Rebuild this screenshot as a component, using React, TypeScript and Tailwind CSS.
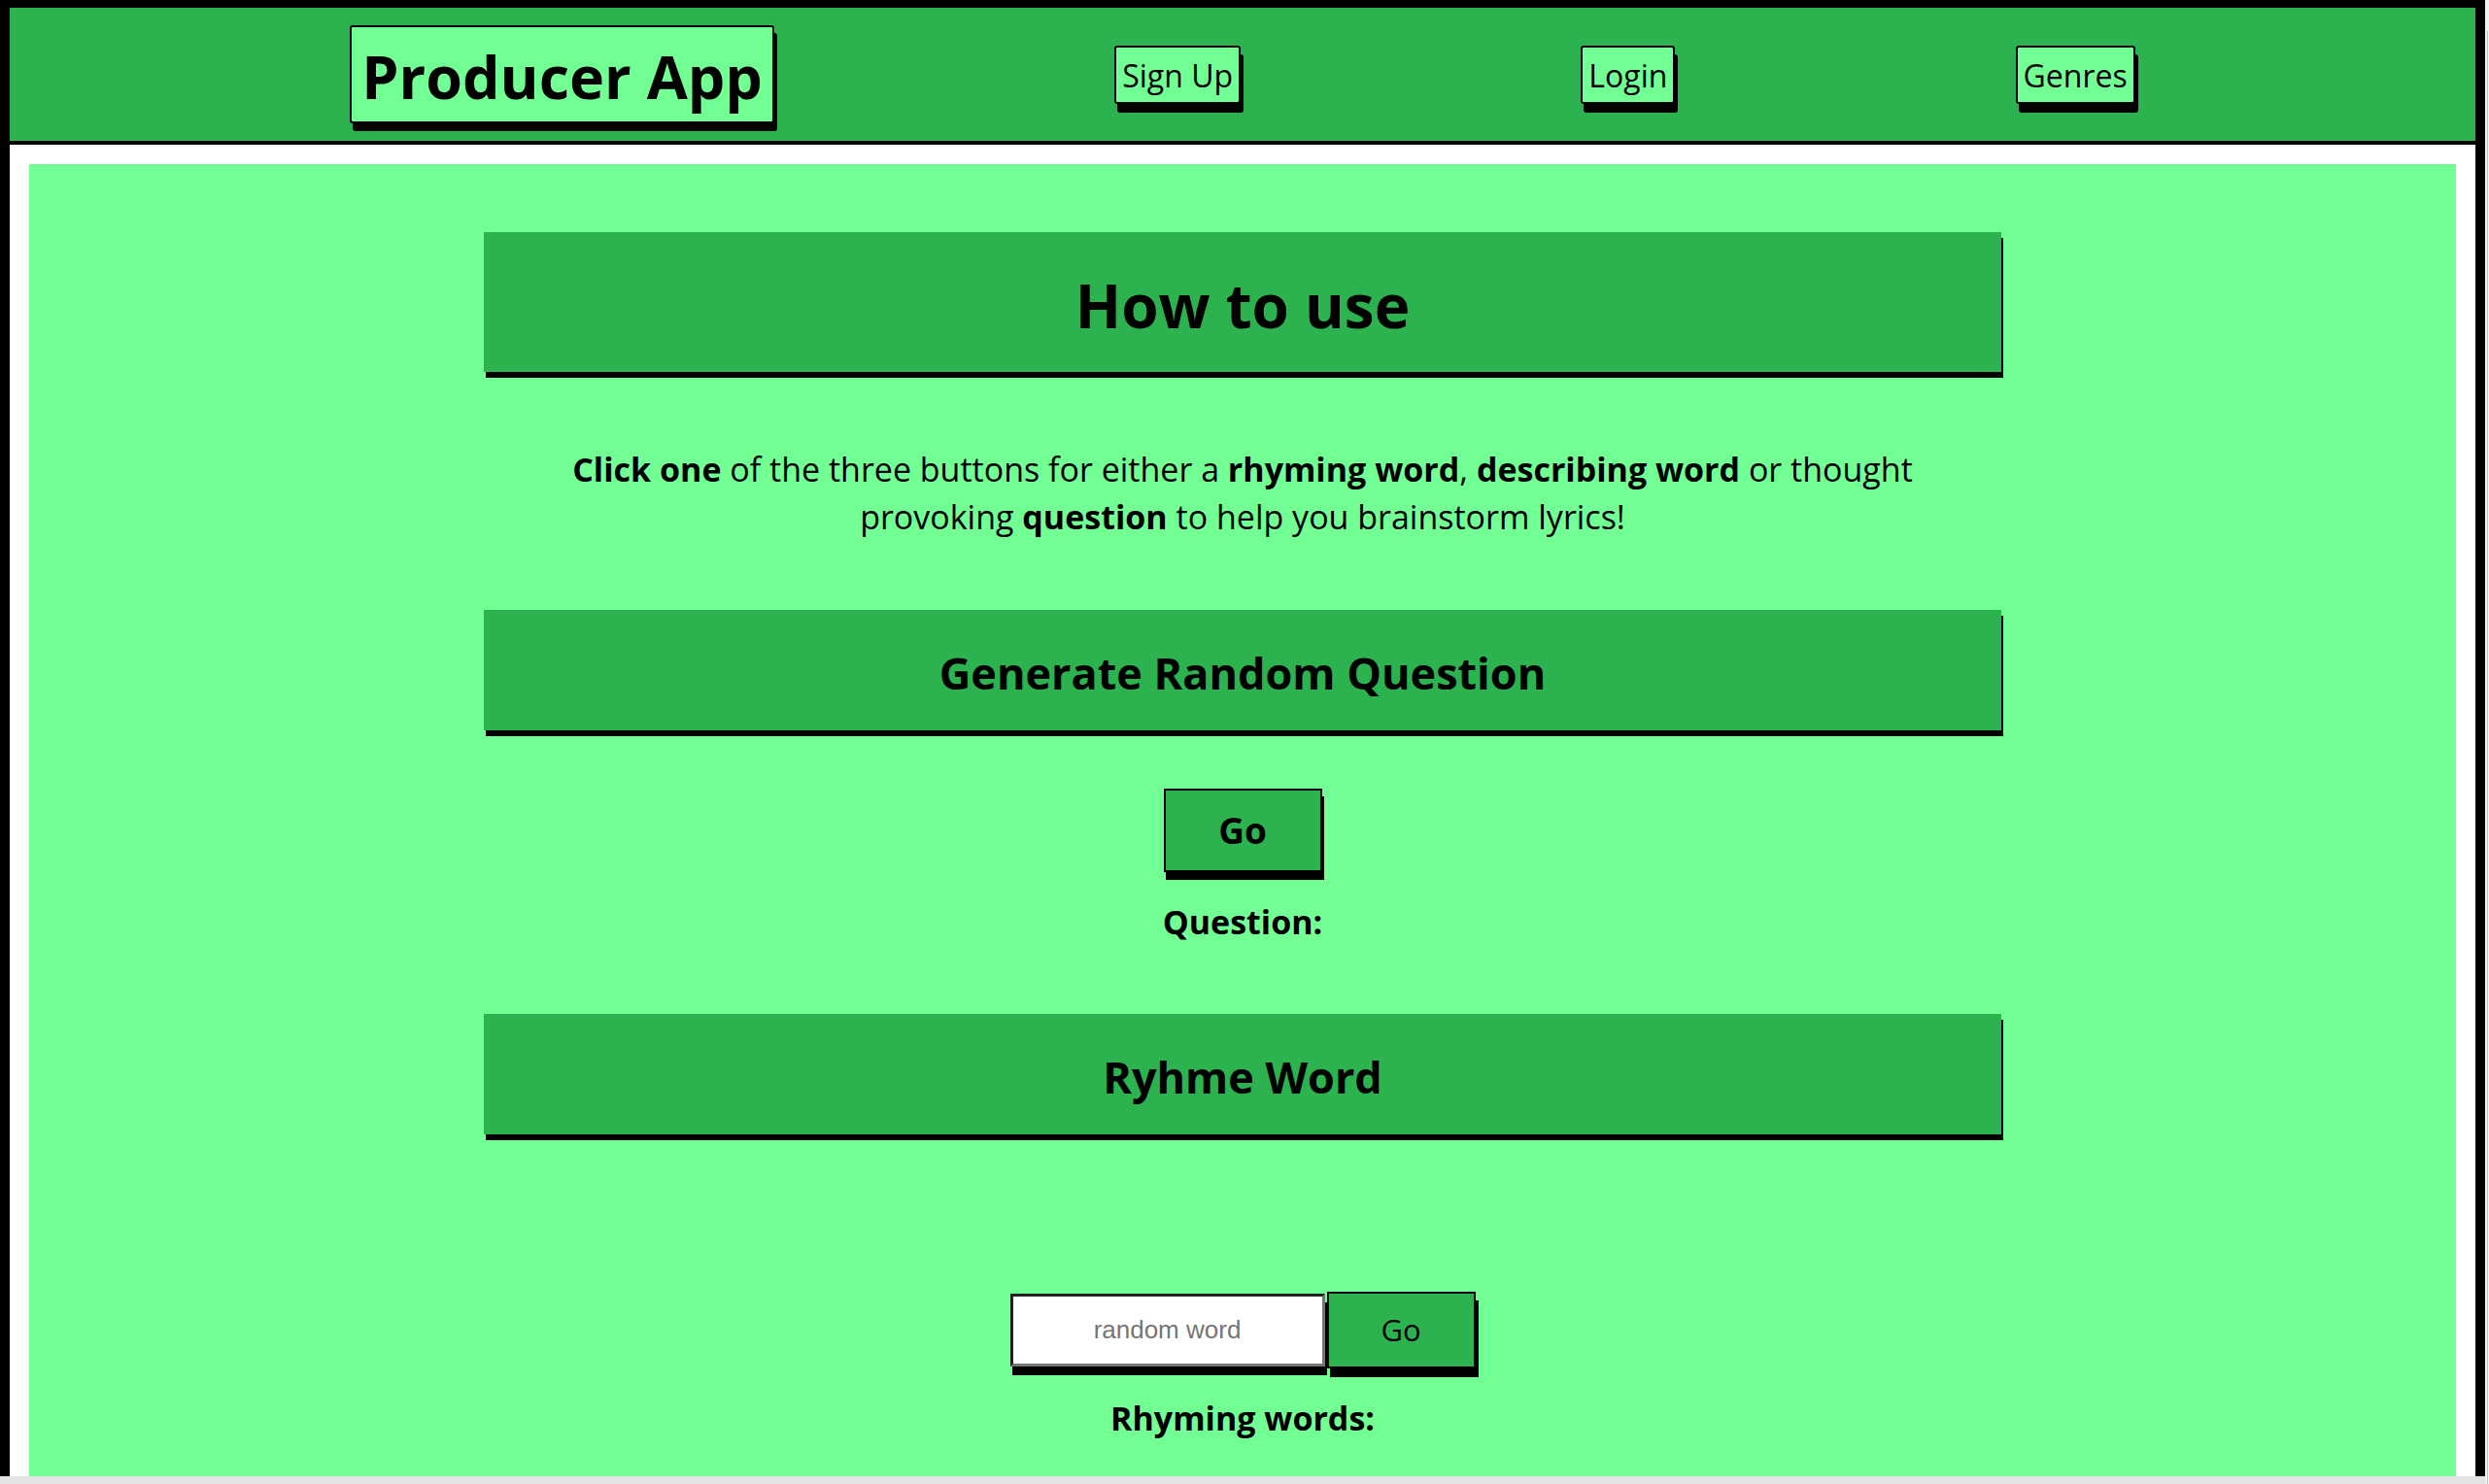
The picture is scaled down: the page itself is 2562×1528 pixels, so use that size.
import { useState } from "react";

const navLinks = ["Sign Up", "Login", "Genres"];

function SectionBar({ title, big }: { title: string; big?: boolean }) {
  return (
    <div
      className={`w-[1562px] flex items-center justify-center pt-[6px] bg-[#2cb34f] shadow-[2px_6px_0_#000] ${
        big ? "h-[144px]" : "h-[124px]"
      }`}
    >
      <h2 className={`font-bold text-black ${big ? "text-[62px]" : "text-[45px]"}`}>{title}</h2>
    </div>
  );
}

export default function App() {
  const [question, setQuestion] = useState("");
  const [word, setWord] = useState("");

  return (
    <div className="flex h-[1528px] w-full overflow-hidden bg-[#f1f1f1] font-['Open_Sans',sans-serif]">
      <div className="flex flex-1 flex-col">
        <div className="flex-1 min-h-0 overflow-hidden border-x-[10px] border-t-[8px] border-black bg-white">
          {/* Header */}
          <header className="h-[141px] flex items-center justify-evenly bg-[#2cb34f] border-b-4 border-black">
            <div className="h-[101px] flex items-center pt-[4px] px-[10px] bg-[#72ff94] border-2 border-black rounded-[3px] shadow-[3px_8px_0_#000]">
              <h1 className="text-[61px] font-bold leading-none text-black">Producer App</h1>
            </div>
            {navLinks.map((link) => (
              <button
                key={link}
                className="h-[60px] flex items-center pt-[2px] px-[6px] bg-[#72ff94] border-2 border-black rounded-[3px] shadow-[3px_9px_0_#000] text-[32px] text-black"
              >
                {link}
              </button>
            ))}
          </header>

          {/* Main */}
          <main className="p-[20px]">
            <div className="bg-[#72ff94] flex flex-col items-center pt-[70px] min-h-[1400px]">
              <SectionBar title="How to use" big />

              <p className="mt-[76px] text-[34px] leading-[49px] text-center text-black">
                <b>Click one</b> of the three buttons for either a <b>rhyming word</b>, <b>describing word</b> or thought
                <br />
                provoking <b>question</b> to help you brainstorm lyrics!
              </p>

              <div className="mt-[71px]">
                <SectionBar title="Generate Random Question" />
              </div>

              <button
                onClick={() => setQuestion("")}
                className="mt-[60px] w-[163px] h-[86px] bg-[#2cb34f] border-2 border-black shadow-[2px_8px_0_#000] text-[37px] font-bold text-black"
              >
                Go
              </button>
              <p className="mt-[28px] text-[34px] font-bold text-black leading-[46px]">Question: {question}</p>

              <div className="mt-[72px]">
                <SectionBar title="Ryhme Word" />
              </div>

              <div className="mt-[162px] flex items-center">
                <input
                  value={word}
                  onChange={(e) => setWord(e.target.value)}
                  placeholder="random word"
                  className="w-[324px] h-[75px] bg-white border-[3px] border-t-[#222] border-l-[#222] border-b-[#777] border-r-[#777] shadow-[2px_9px_0_#000] text-center text-[26px] font-['Liberation_Sans',sans-serif] placeholder:text-[#757575] outline-none"
                />
                <button className="ml-[2px] w-[153px] h-[79px] bg-[#2cb34f] border-2 border-black shadow-[3px_9px_0_#000] text-[31px] text-black">
                  Go
                </button>
              </div>
              <p className="mt-[28px] text-[34px] font-bold text-black leading-[46px]">Rhyming words:</p>
            </div>
          </main>
        </div>
        <div className="h-[8px] bg-[#e3e3e3]" />
      </div>
      <div className="w-[4px] pt-[32px] bg-[#f1f1f1]">
        <div className="ml-[2px] h-full w-[1px] bg-[#c1c1c1]" />
      </div>
    </div>
  );
}
